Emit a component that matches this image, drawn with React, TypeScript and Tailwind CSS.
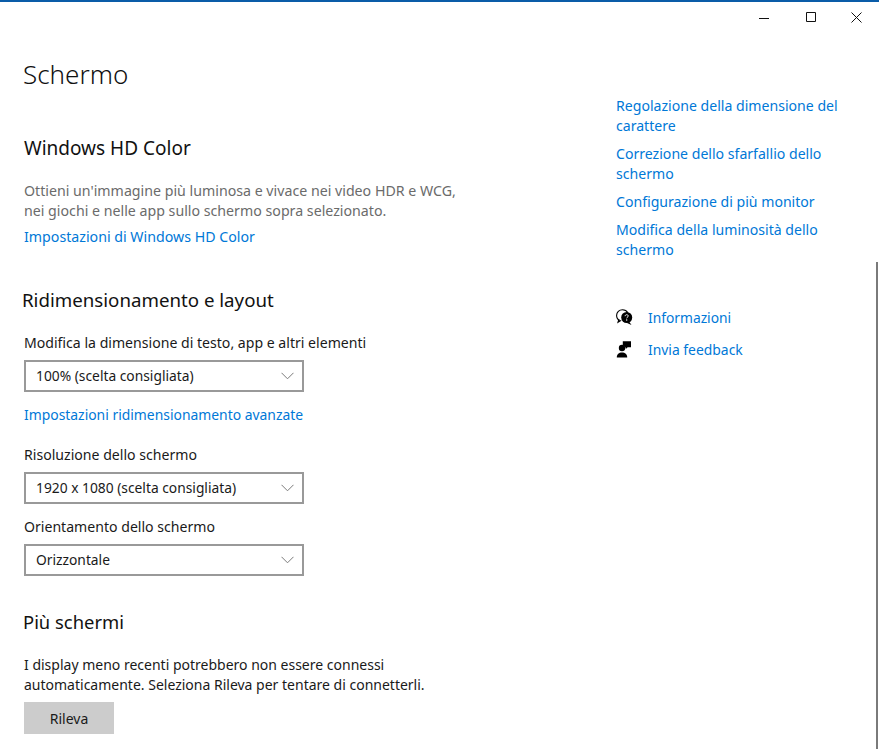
import React from 'react';

const font = "font-['Noto_Sans',sans-serif]";

const Select: React.FC<{ value: string }> = ({ value }) => (
  <div className="flex items-center justify-between w-[280px] h-[32px] border-2 border-[#999999] pl-[10px] pr-[8px] text-[13.8px] text-[#1a1a1a]">
    <span>{value}</span>
    <svg width="13" height="8" viewBox="0 0 13 8" fill="none" stroke="#7a7a7a" strokeWidth="1">
      <path d="M.5.8l6 6 6-6" />
    </svg>
  </div>
);

const SideLink: React.FC<{ children: React.ReactNode }> = ({ children }) => (
  <a className="block text-[#0078d7] text-[14.1px] leading-[20px] w-[235px]">{children}</a>
);

export default function App() {
  return (
    <div className={`relative w-[879px] h-[749px] overflow-hidden bg-white border-t-2 border-[#0a5ca8] ${font}`}>
      {/* window controls */}
      <div className="flex justify-end h-[30px] text-[#111111]">
        <button className="w-[46px] h-[30px] flex items-center justify-center">
          <svg width="10" height="10" viewBox="0 0 10 10" stroke="currentColor" fill="none"><path d="M0 6.5h10" /></svg>
        </button>
        <button className="w-[46px] h-[30px] flex items-center justify-center">
          <svg width="10" height="10" viewBox="0 0 10 10" stroke="currentColor" fill="none" className="ml-[2px]"><path d="M.5.5h9v9h-9z" /></svg>
        </button>
        <button className="w-[46px] h-[30px] flex items-center justify-center">
          <svg width="11" height="11" viewBox="0 0 11 11" stroke="currentColor" fill="none"><path d="M.5.5l10 10M10.5.5l-10 10" /></svg>
        </button>
      </div>

      <div className="flex">
        {/* main column */}
        <div className="w-[616px] pl-[24px]">
          <h1 className="text-[26px] font-light leading-[36px] text-[#111111] mt-[24px] -ml-[1px]">Schermo</h1>

          <h2 className="text-[19px] leading-[26px] text-[#111111] mt-[43px]">Windows HD Color</h2>
          <p className="text-[14.2px] leading-[20px] text-[#6b6b6b] mt-[20px]">
            Ottieni un'immagine più luminosa e vivace nei video HDR e WCG,
            <br />
            nei giochi e nelle app sullo schermo sopra selezionato.
          </p>
          <a className="block text-[14.2px] leading-[20px] text-[#0078d7] mt-[6px]">Impostazioni di Windows HD Color</a>

          <h2 className="text-[18.7px] leading-[26px] text-[#111111] mt-[40px] -ml-[2px]">Ridimensionamento e layout</h2>
          <div className="text-[14.1px] leading-[20px] text-[#1a1a1a] mt-[20px]">Modifica la dimensione di testo, app e altri elementi</div>
          <div className="mt-[7px]"><Select value="100% (scelta consigliata)" /></div>
          <a className="block text-[13.9px] leading-[20px] text-[#0078d7] mt-[13px]">Impostazioni ridimensionamento avanzate</a>

          <div className="text-[14.1px] leading-[20px] text-[#1a1a1a] mt-[20px]">Risoluzione dello schermo</div>
          <div className="mt-[7px]"><Select value="1920 x 1080 (scelta consigliata)" /></div>
          <div className="text-[14.1px] leading-[20px] text-[#1a1a1a] mt-[13px]">Orientamento dello schermo</div>
          <div className="mt-[7px]"><Select value="Orizzontale" /></div>

          <h2 className="text-[18.4px] leading-[26px] text-[#111111] mt-[33px] -ml-[1px]">Più schermi</h2>
          <p className="text-[14px] leading-[20px] text-[#1a1a1a] mt-[20px]">
            I display meno recenti potrebbero non essere connessi
            <br />
            automaticamente. Seleziona Rileva per tentare di connetterli.
          </p>
          <button className="block w-[90px] h-[32px] mt-[7px] bg-[#cccccc] text-[14px] text-[#1a1a1a]">Rileva</button>
        </div>

        {/* side column */}
        <div className="pt-[64px] w-[263px]">
          <div className="flex flex-col gap-[8px]">
            <SideLink>Regolazione della dimensione del carattere</SideLink>
            <SideLink>Correzione dello sfarfallio dello schermo</SideLink>
            <SideLink>Configurazione di più monitor</SideLink>
            <SideLink>Modifica della luminosità dello schermo</SideLink>
          </div>
          <div className="mt-[48px] flex flex-col gap-[12px]">
            <div className="flex items-center gap-[16px]">
              <svg width="17" height="18" viewBox="0 0 17 18" className="shrink-0 -mr-[1px]" fill="none">
                <path d="M4 11.500C1.900 10.600.6 8.700.6 6.400.6 3.200 3.200.7 6.500.7c2.300 0 4.300 1.200 5.300 3" stroke="#000" strokeWidth="1.100" />
                <path d="M2.800 10.500l-.8 2.800 3.200-1.900" stroke="#000" strokeWidth="1.100" />
                <circle cx="10.700" cy="8.500" r="5.500" fill="#000" />
                <path d="M13 12.500l2.500 3.500-5-2.200z" fill="#000" />
                <path d="M9.100 7.200c.1-1 .8-1.500 1.600-1.500s1.500.5 1.500 1.300c0 1.200-1.500 1.200-1.500 2.300" stroke="#fff" strokeWidth="1" />
                <circle cx="10.700" cy="11" r=".7" fill="#fff" />
              </svg>
              <a className="text-[#0078d7] text-[13.800px] leading-[20px]">Informazioni</a>
            </div>
            <div className="flex items-center gap-[16px]">
              <svg width="16" height="18" viewBox="0 0 16 18" className="shrink-0" fill="#000">
                <circle cx="6" cy="7" r="3.200" />
                <path d="M.8 16.500c0-3.400 2.100-5 5.200-5s5.200 1.600 5.200 5z" />
                <path d="M6.800.2h8.200v6h-3.400l-1.700 1.700c-.2-1.800-1.300-3-3.100-3.400z" />
              </svg>
              <a className="text-[#0078d7] text-[13.900px] leading-[20px]">Invia feedback</a>
            </div>
          </div>
        </div>
      </div>

      {/* scrollbar thumb */}
      <div className="absolute right-[1px] top-[260px] bottom-0 w-[2px] bg-[#7a7a7a]" />
    </div>
  );
}
